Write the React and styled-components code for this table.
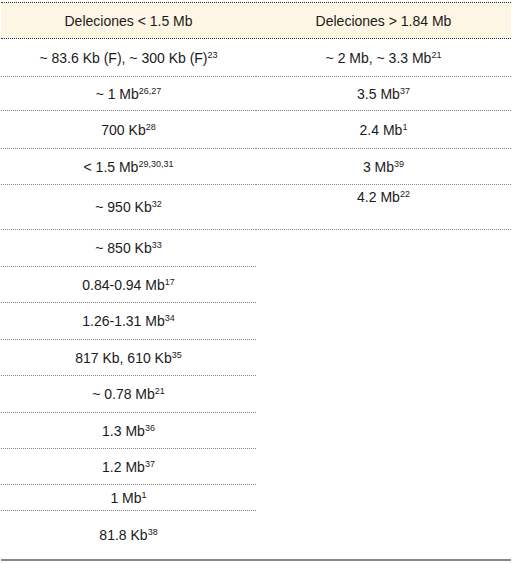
import styled, { createGlobalStyle } from "styled-components";

const GlobalStyle = createGlobalStyle`
  body {
    margin: 0;
    background: #fff;
    font-family: "Liberation Sans", Arial, sans-serif;
  }
`;

const rows = [
  { h: 38, left: ["~ 83.6 Kb (F), ~ 300 Kb (F)", "23"], right: ["~ 2 Mb, ~ 3.3 Mb", "21"] },
  { h: 34, left: ["~ 1 Mb", "26,27"], right: ["3.5 Mb", "37"] },
  { h: 38, left: ["700 Kb", "28"], right: ["2.4 Mb", "1"] },
  { h: 36, left: ["< 1.5 Mb", "29,30,31"], right: ["3 Mb", "39"] },
  { h: 45, left: ["~ 950 Kb", "32"], right: ["4.2 Mb", "22"], top: true },
  { h: 37, left: ["~ 850 Kb", "33"] },
  { h: 36, left: ["0.84-0.94 Mb", "17"] },
  { h: 37, left: ["1.26-1.31 Mb", "34"] },
  { h: 36, left: ["817 Kb, 610 Kb", "35"] },
  { h: 37, left: ["~ 0.78 Mb", "21"] },
  { h: 36, left: ["1.3 Mb", "36"] },
  { h: 36, left: ["1.2 Mb", "37"] },
  { h: 26, left: ["1 Mb", "1"] },
  { h: 48, left: ["81.8 Kb", "38"] },
];

const Wrap = styled.div`
  padding: 2px 0 0 1px;
  width: 510px;
`;

const Table = styled.div`
  display: flex;
  flex-direction: column;
  border-bottom: 2px solid #888;
  color: #1a1a1a;
  font-size: 14px;
  line-height: 16px;
`;

const Row = styled.div`
  display: flex;
  height: ${(p) => p.$h}px;
`;

const HeadRow = styled(Row)`
  background: #fdf6e4;
  border-top: 1px dotted #333;
  border-bottom: 1px dotted #333;
  box-sizing: border-box;
`;

const Cell = styled.div`
  flex: 1;
  display: flex;
  justify-content: center;
  align-items: ${(p) => (p.$top ? "flex-start" : "center")};
  padding-top: ${(p) => (p.$top ? "4px" : "0")};
  box-sizing: border-box;
  border-bottom: ${(p) => (p.$line ? "1px dotted #888" : "none")};
  white-space: nowrap;

  sup {
    font-size: 9px;
    line-height: 0;
    vertical-align: 5px;
  }
`;

const Value = ({ v }) =>
  v ? (
    <span>
      {v[0]}
      <sup>{v[1]}</sup>
    </span>
  ) : null;

export default function App() {
  return (
    <>
      <GlobalStyle />
      <Wrap>
        <Table>
          <HeadRow $h={37}>
            <Cell>Deleciones &lt; 1.5 Mb</Cell>
            <Cell>Deleciones &gt; 1.84 Mb</Cell>
          </HeadRow>
          {rows.map((r, i) => (
            <Row key={i} $h={r.h}>
              <Cell $line={i < rows.length - 1}>
                <Value v={r.left} />
              </Cell>
              <Cell $line={!!r.right} $top={r.top}>
                <Value v={r.right} />
              </Cell>
            </Row>
          ))}
        </Table>
      </Wrap>
    </>
  );
}
